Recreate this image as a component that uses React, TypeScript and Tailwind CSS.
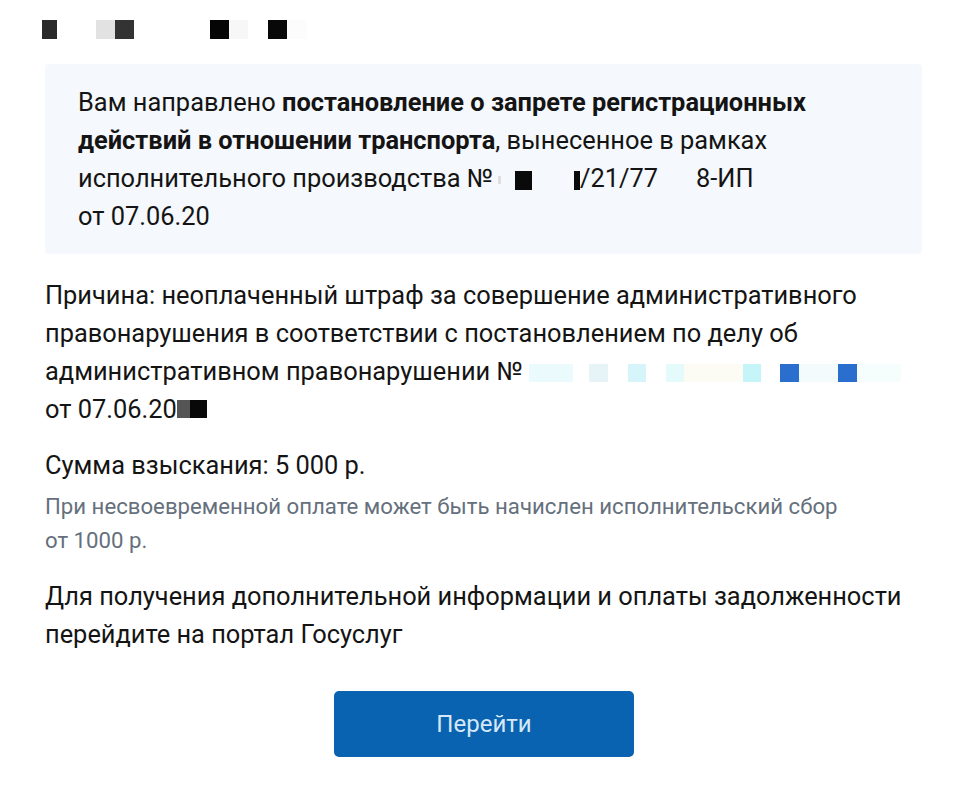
import React from "react";

const Sq = ({ c, w = 19, h = 19 }: { c: string; w?: number; h?: number }) => (
  <span className="inline-block" style={{ background: c, width: w, height: h }} />
);

export default function App() {
  return (
    <div className="w-[960px] h-[788px] bg-white text-[#141414] overflow-hidden" style={{ fontFamily: "Roboto, 'Noto Sans', sans-serif" }}>
      <div className="flex items-center h-[20px] mt-[19px] ml-[42px]">
        <span className="w-[15px] h-[19px] bg-[#2a2a2a]" />
        <span className="w-[19px] h-[19px] bg-[#e2e2e2] ml-[39px]" />
        <span className="w-[19px] h-[19px] bg-[#333333]" />
        <span className="w-[19px] h-[19px] bg-[#050505] ml-[76px]" />
        <span className="w-[19px] h-[19px] bg-[#f7f7f7]" />
        <span className="w-[19px] h-[19px] bg-[#080808] ml-[20px]" />
        <span className="w-[20px] h-[19px] bg-[#fcfcfc]" />
      </div>

      <div className="ml-[45px] mr-[38px] mt-[25px] bg-[#f5f8fc] rounded-[4px] pl-[33px] pr-[47px] pt-[19px] pb-[19px] text-[25.4px] leading-[38px]">
        <p>
          Вам направлено <b className="font-bold">постановление о запрете регистрационных действий в отношении транспорта</b>, вынесенное в рамках исполнительного производства №
          <span className="inline-flex items-center align-middle ml-[5px]">
            <span className="w-[3px] h-[8px] bg-[#dddddd] mr-[14px]" />
            <Sq c="#0a0a0a" w={17} h={19} />
            <span className="w-[42px]" />
            <Sq c="#0a0a0a" w={6} h={19} />
          </span>
          /21/77
          <span className="inline-block w-[38px]" />
          8-ИП
          <br />
          от 07.06.20
        </p>
      </div>

      <div className="px-[45px] pt-[22px] text-[25.4px] leading-[38px]">
        <p>
          Причина: неоплаченный штраф за совершение административного правонарушения в соответствии с постановлением по делу об административном правонарушении №
          <span className="inline-flex items-center align-middle ml-[6px]">
            <span className="w-[44px] h-[18px] bg-[#eafafd]" />
            <span className="w-[19px] h-[18px] bg-[#e6f3f7] ml-[16px]" />
            <span className="w-[18px] h-[18px] bg-[#d5f5fa] ml-[20px]" />
            <span className="w-[18px] h-[18px] bg-[#e5fafb] ml-[20px]" />
            <span className="w-[59px] h-[18px] bg-[#fdfcf4]" />
            <span className="w-[18px] h-[18px] bg-[#c6f5f9]" />
            <span className="w-[19px] h-[18px] bg-[#2a6fce] ml-[19px]" />
            <span className="w-[39px] h-[18px] bg-[#f3fbfc]" />
            <span className="w-[19px] h-[18px] bg-[#2a6fce]" />
            <span className="w-[44px] h-[18px] bg-[#f5fdfd]" />
          </span>
          <br />
          от 07.06.20
          <span className="inline-flex">
            <Sq c="#555555" w={13} h={18} />
            <Sq c="#080808" w={17} h={18} />
          </span>
        </p>

        <p className="mt-[18px]">Сумма взыскания: 5 000 р.</p>
        <p className="mt-[5px] text-[22.2px] leading-[34px] text-[#65707c]">
          При несвоевременной оплате может быть начислен исполнительский сбор
          <br />
          от 1000 р.
        </p>

        <p className="mt-[20px]">
          Для получения дополнительной информации и оплаты задолженности
          <br />
          перейдите на портал Госуслуг
        </p>

        <div className="flex justify-center mt-[38px] pl-[8px]">
          <button className="w-[300px] h-[66px] rounded-[5px] bg-[#0a63b0] text-[#d6e8f7] text-[24px]">Перейти</button>
        </div>
      </div>
    </div>
  );
}
